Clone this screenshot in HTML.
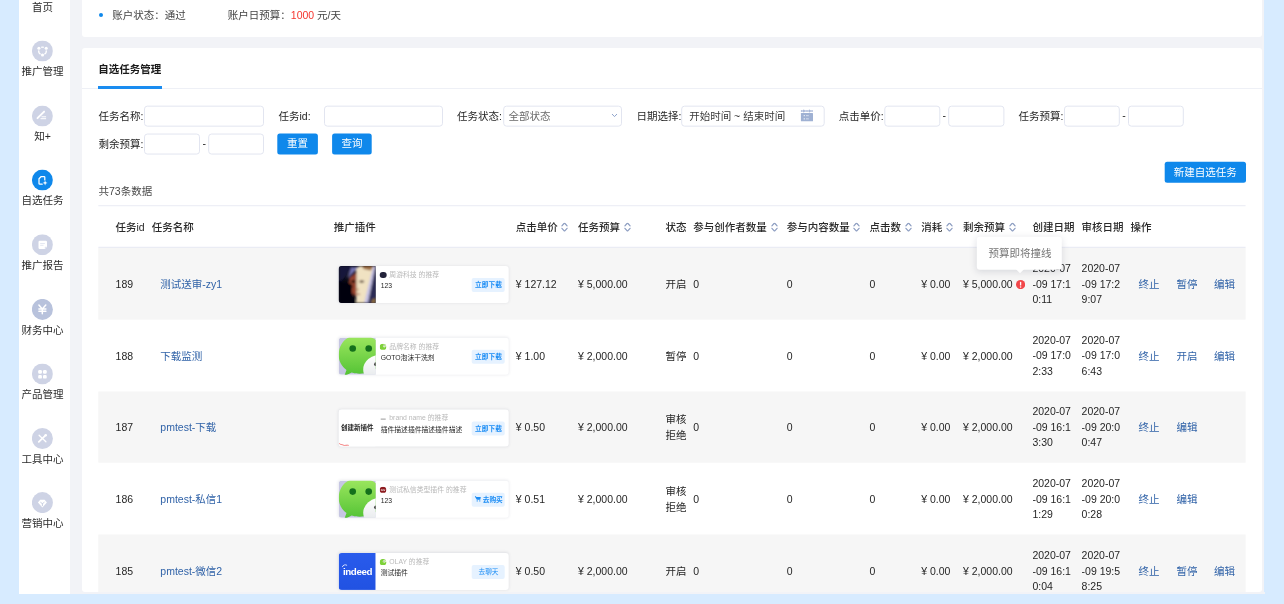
<!DOCTYPE html>
<html lang="zh-CN">
<head>
<meta charset="utf-8">
<title>自选任务管理</title>
<style>
html,body{margin:0;padding:0}
body{width:1284px;height:604px;overflow:hidden;background:#d7ebff;position:relative;font-family:"Liberation Sans","Noto Sans CJK SC",sans-serif;font-size:10.5px;color:#262626}
.a{position:absolute}
.layer{position:absolute;left:0;top:0;width:1284px;height:604px;will-change:transform}
.t{position:absolute;white-space:nowrap;line-height:16px;height:16px}
.page{position:absolute;left:19px;top:0;width:1245.3px;height:594.5px;background:#f2f3f7;overflow:hidden}
.side{position:absolute;left:0;top:0;width:51.3px;height:594.5px;background:#fff}
.card{position:absolute;background:#fff;border-radius:3px}
.ico{position:absolute;left:0;top:0;width:21px;height:21px}
.sl{position:absolute;left:19px;width:47px;text-align:center;line-height:16px;height:16px;white-space:nowrap;color:#2b2b2b}
.btn{position:absolute;box-sizing:border-box;height:21px;color:#fff;text-align:center;line-height:21px;white-space:nowrap}
.h{font-weight:500;color:#2a2a2a}
.lk{color:#3163a8}
.pc{position:absolute;left:0;top:0;width:170.3px;height:37px;background:#fff;border-radius:3px;box-shadow:0 0 3px rgba(30,40,80,.10)}
.pi{position:absolute;left:0;top:0;width:37px;height:37px;border-radius:3px 0 0 3px;overflow:hidden}
.pt{position:absolute;white-space:nowrap;font-size:6.6px;line-height:9px;height:9px}
.pb{position:absolute;left:133.3px;top:11.8px;width:33px;height:14px;border-radius:2px;background:#e6f2ff;color:#1a8cf5;font-size:6.7px;line-height:14px;text-align:center;white-space:nowrap}
</style>
</head>
<body>
<div class="page">
<div class="side"></div>
<div class="card" style="left:63px;top:-10px;width:1180.3px;height:46.7px"></div>
<div class="card" style="left:63px;top:48px;width:1180.3px;height:543.8px"></div>
</div>
<div class="layer">
<div class="sl" style="top:-1.30px">首页</div>
<svg class="ico" style="transform:translate(31.9px,40.50px)" viewBox="0 0 21 21"><circle cx="10.5" cy="10.5" r="10.5" fill="#ced3e5"/><g fill="none" stroke="#fff" stroke-width="1.3"><path d="M14.34 9.84A3.8 3.8 0 0 1 12.5 13.79"/><path d="M8.7 13.79A3.8 3.8 0 0 1 6.86 9.84"/><path d="M9.300 6.930A3.800 3.800 0 0 1 11.900 6.930"/></g><g fill="#fff"><circle cx="7" cy="7.700" r="1.550"/><circle cx="14.300" cy="7.700" r="1.550"/><circle cx="10.600" cy="14.500" r="1.550"/></g></svg>
<div class="sl" style="top:63.30px">推广管理</div>
<svg class="ico" style="transform:translate(31.9px,105.60px)" viewBox="0 0 21 21"><circle cx="10.5" cy="10.5" r="10.5" fill="#ced3e5"/><path d="M5.6 12.6L12.2 6" stroke="#fff" stroke-width="1.9" stroke-linecap="round"/><path d="M9.6 11.2H14.2M8.6 13.1H14.2" stroke="#fff" stroke-width="1"/></svg>
<div class="sl" style="top:128.40px">知+</div>
<svg class="ico" style="transform:translate(31.9px,169.60px)" viewBox="0 0 21 21"><circle cx="10.5" cy="10.5" r="10.5" fill="#0f88eb"/><path d="M12.9 10.300V7.700Q12.900 6.900 12.100 6.900H9.300L7.100 9.200V13.800Q7.100 14.600 7.900 14.600H10.300" fill="none" stroke="#fff" stroke-width="1.25" stroke-linejoin="round" stroke-linecap="round"/><path d="M13.200 10.800L13.900 12.600L15.700 13.300L13.900 14L13.200 15.800L12.500 14L10.700 13.300L12.500 12.600Z" fill="#fff"/></svg>
<div class="sl" style="top:192.40px">自选任务</div>
<svg class="ico" style="transform:translate(31.9px,234.20px)" viewBox="0 0 21 21"><circle cx="10.5" cy="10.5" r="10.5" fill="#ced3e5"/><path d="M7.8 6.5H13.9Q15.1 6.500 15.1 7.7V12.6L12.9 14.8H7.8Q6.6 14.8 6.6 13.6V7.7Q6.6 6.5 7.8 6.5Z" fill="#fff"/><path d="M8.3 9.3H13M8.3 11.1H11.6" stroke="#e1e5f0" stroke-width=".9"/><path d="M12.9 14.8V13.2Q12.9 12.6 13.5 12.6H15.1Z" fill="#dfe3ef"/></svg>
<div class="sl" style="top:257.00px">推广报告</div>
<svg class="ico" style="transform:translate(31.9px,298.90px)" viewBox="0 0 21 21"><circle cx="10.5" cy="10.5" r="10.5" fill="#b8c2dc"/><path d="M7 6.2L10.4 10.2L13.9 6.2M10.4 10.2V14.9M7 10.2H14M7 12.3H14" fill="none" stroke="#fff" stroke-width="1.5" stroke-linecap="round" stroke-linejoin="round"/></svg>
<div class="sl" style="top:321.70px">财务中心</div>
<svg class="ico" style="transform:translate(31.9px,363.40px)" viewBox="0 0 21 21"><circle cx="10.5" cy="10.5" r="10.5" fill="#ced3e5"/><g fill="#fff"><rect x="6.3" y="6.7" width="3.7" height="3.7" rx="1.2"/><rect x="11.1" y="6.7" width="3.7" height="3.7" rx="1.2"/><rect x="6.3" y="11.5" width="3.7" height="3.7" rx="1.2"/><rect x="11.1" y="11.5" width="3.7" height="3.7" rx="1.2"/></g></svg>
<div class="sl" style="top:386.20px">产品管理</div>
<svg class="ico" style="transform:translate(31.9px,428.00px)" viewBox="0 0 21 21"><circle cx="10.5" cy="10.5" r="10.5" fill="#ced3e5"/><path d="M6.9 13.8L13.6 7.4" stroke="#fff" stroke-width="1.8" stroke-linecap="round"/><path d="M7.2 7.3L14 13.7" stroke="#fff" stroke-width="1.3" stroke-linecap="round"/><circle cx="13.8" cy="7.3" r="1.3" fill="#fff"/></svg>
<div class="sl" style="top:450.80px">工具中心</div>
<svg class="ico" style="transform:translate(31.9px,492.10px)" viewBox="0 0 21 21"><circle cx="10.5" cy="10.5" r="10.5" fill="#ced3e5"/><path d="M8.3 7.6H12.7L15 10.4L10.5 15.3L6 10.4Z" fill="#fff"/><path d="M8.8 10.3L10.5 11.6L12.2 10.3M10.500 11.6V13.6" fill="none" stroke="#c3cadf" stroke-width=".9" stroke-linecap="round"/></svg>
<div class="sl" style="top:514.90px">营销中心</div>
<div class="a" style="left:98.6px;top:13.3px;width:4px;height:4px;border-radius:2px;background:#0f88eb"></div>
<span class="t " style="left:112.30px;top:7.00px;color:#444">账户状态：通过</span>
<span class="t " style="left:227.80px;top:7.00px;color:#444">账户日预算：<span style="color:#f5352e">1000</span> 元/天</span>
<span class="t " style="left:98.20px;top:61.00px;font-weight:700;color:#1a1a1a">自选任务管理</span>
<div class="a" style="left:82px;top:88.3px;width:1180.3px;height:1px;background:#eef0f6"></div>
<div class="a" style="left:98px;top:86.3px;width:63.5px;height:2.6px;background:#1a8cf0"></div>
<svg class="a" style="left:0;top:0" width="1284" height="200" viewBox="0 0 1284 200"><rect x="144.50" y="106.15" width="119.00" height="20.00" rx="2.8" fill="#fff" stroke="#e2e5f0" stroke-width="1"/><rect x="324.50" y="106.15" width="118.00" height="20.00" rx="2.8" fill="#fff" stroke="#e2e5f0" stroke-width="1"/><rect x="503.70" y="106.15" width="117.80" height="20.00" rx="2.8" fill="#fff" stroke="#e2e5f0" stroke-width="1"/><rect x="681.70" y="106.15" width="142.50" height="20.00" rx="2.8" fill="#fff" stroke="#e2e5f0" stroke-width="1"/><rect x="884.80" y="106.15" width="55.00" height="20.00" rx="2.8" fill="#fff" stroke="#e2e5f0" stroke-width="1"/><rect x="948.70" y="106.15" width="55.20" height="20.00" rx="2.8" fill="#fff" stroke="#e2e5f0" stroke-width="1"/><rect x="1064.50" y="106.15" width="54.80" height="20.00" rx="2.8" fill="#fff" stroke="#e2e5f0" stroke-width="1"/><rect x="1128.50" y="106.15" width="54.80" height="20.00" rx="2.8" fill="#fff" stroke="#e2e5f0" stroke-width="1"/><rect x="144.50" y="134.05" width="55.00" height="20.00" rx="2.8" fill="#fff" stroke="#e2e5f0" stroke-width="1"/><rect x="208.70" y="134.05" width="54.80" height="20.00" rx="2.8" fill="#fff" stroke="#e2e5f0" stroke-width="1"/><rect x="277.30" y="133.45" width="40.60" height="21.00" rx="2.5" fill="#0f88eb"/><rect x="332.10" y="133.45" width="39.60" height="21.00" rx="2.5" fill="#0f88eb"/><rect x="1164.70" y="161.80" width="81.30" height="21.00" rx="2.5" fill="#0f88eb"/></svg>
<span class="t " style="left:98.50px;top:108.15px;">任务名称:</span>
<span class="t " style="left:278.50px;top:108.15px;">任务id:</span>
<span class="t " style="left:457.00px;top:108.15px;">任务状态:</span>
<span class="t " style="left:508.60px;top:108.15px;color:#6a6a6a">全部状态</span>
<svg class="a" style="left:611px;top:113.2px" width="7" height="5" viewBox="0 0 7 5"><path d="M1 1L3.5 3.600L6 1" fill="none" stroke="#8fa4cc" stroke-width="1"/></svg>
<span class="t " style="left:636.60px;top:108.15px;">日期选择:</span>
<span class="t " style="left:689.20px;top:108.15px;color:#3a3a3a">开始时间 ~ 结束时间</span>
<svg class="a" style="left:800px;top:109px" width="14" height="13" viewBox="0 0 14 13"><g fill="#a6b6d7"><rect x="0.9" y="1.2" width="12.1" height="1.6"/><rect x="3.2" y="0.6" width="1" height="2.8"/><rect x="8.9" y="0.6" width="1" height="2.8"/></g><g fill="#fff" opacity=".55"><rect x="2" y="1.2" width=".6" height="1.6"/><rect x="5.2" y="1.2" width=".6" height="1.6"/><rect x="6.700" y="1.2" width=".6" height="1.6"/><rect x="8" y="1.2" width=".6" height="1.6"/><rect x="10.800" y="1.2" width=".6" height="1.6"/><rect x="11.900" y="1.2" width=".5" height="1.6"/></g><rect x="0.9" y="4" width="12.1" height="8.300" rx=".5" fill="#9fb1d3"/><g fill="#fff" opacity=".85"><rect x="3.700" y="6.100" width="1.200" height="1.100"/><rect x="6" y="6.100" width="2.800" height="1.100" opacity=".6"/><rect x="3.700" y="9.300" width="1.200" height="1.100"/><rect x="6" y="9.300" width="2.800" height="1.100" opacity=".6"/></g></svg>
<span class="t " style="left:838.80px;top:108.15px;">点击单价:</span>
<span class="t " style="left:942.60px;top:107.25px;">-</span>
<span class="t " style="left:1018.60px;top:108.15px;">任务预算:</span>
<span class="t " style="left:1122.30px;top:107.25px;">-</span>
<span class="t " style="left:98.50px;top:136.25px;">剩余预算:</span>
<span class="t " style="left:202.40px;top:135.35px;">-</span>
<div class="btn" style="left:277.30px;top:133.45px;width:40.60px">重置</div>
<div class="btn" style="left:332.10px;top:133.45px;width:39.60px">查询</div>
<div class="btn" style="left:1164.70px;top:161.80px;width:81.30px">新建自选任务</div>
<span class="t " style="left:98.50px;top:182.50px;color:#4a4a4a">共73条数据</span>
<svg class="a" style="left:0;top:200px" width="1284" height="404" viewBox="0 200 1284 404"><rect x="98.3" y="205.3" width="1147.3" height="0.9" fill="#e7e9f3"/><rect x="98.3" y="247.50" width="1147.3" height="72.10" fill="#f6f6f6"/><rect x="98.3" y="391.50" width="1147.3" height="71.20" fill="#f6f6f6"/><rect x="98.3" y="534.50" width="1147.3" height="71.80" fill="#f6f6f6"/><rect x="98.3" y="246.800" width="1147.3" height="0.9" fill="#e4e7f2"/></svg>
<span class="t h" style="left:115.40px;top:218.90px;">任务id</span>
<span class="t h" style="left:151.80px;top:218.90px;">任务名称</span>
<span class="t h" style="left:333.80px;top:218.90px;">推广插件</span>
<span class="t h" style="left:515.80px;top:218.90px;">点击单价</span>
<svg style="position:absolute;left:561.40px;top:222.30px" width="7" height="10" viewBox="0 0 7 10"><path d="M0.9 3.900L3 1.500Q3.500 0.900 4 1.500L6.100 3.900M0.900 6.300L3 8.700Q3.500 9.300 4 8.700L6.100 6.300" fill="none" stroke="#8b9cc0" stroke-width="1.15" stroke-linecap="round" stroke-linejoin="round"/></svg>
<span class="t h" style="left:578.00px;top:218.90px;">任务预算</span>
<svg style="position:absolute;left:623.60px;top:222.30px" width="7" height="10" viewBox="0 0 7 10"><path d="M0.9 3.900L3 1.500Q3.500 0.900 4 1.500L6.100 3.900M0.900 6.300L3 8.700Q3.500 9.300 4 8.700L6.100 6.300" fill="none" stroke="#8b9cc0" stroke-width="1.15" stroke-linecap="round" stroke-linejoin="round"/></svg>
<span class="t h" style="left:665.50px;top:218.90px;">状态</span>
<span class="t h" style="left:693.30px;top:218.90px;">参与创作者数量</span>
<svg style="position:absolute;left:770.80px;top:222.30px" width="7" height="10" viewBox="0 0 7 10"><path d="M0.9 3.900L3 1.500Q3.500 0.900 4 1.500L6.100 3.900M0.900 6.300L3 8.700Q3.500 9.300 4 8.700L6.100 6.300" fill="none" stroke="#8b9cc0" stroke-width="1.15" stroke-linecap="round" stroke-linejoin="round"/></svg>
<span class="t h" style="left:786.80px;top:218.90px;">参与内容数量</span>
<svg style="position:absolute;left:853.20px;top:222.30px" width="7" height="10" viewBox="0 0 7 10"><path d="M0.9 3.900L3 1.500Q3.500 0.900 4 1.500L6.100 3.900M0.900 6.300L3 8.700Q3.500 9.300 4 8.700L6.100 6.300" fill="none" stroke="#8b9cc0" stroke-width="1.15" stroke-linecap="round" stroke-linejoin="round"/></svg>
<span class="t h" style="left:869.60px;top:218.90px;">点击数</span>
<svg style="position:absolute;left:904.80px;top:222.30px" width="7" height="10" viewBox="0 0 7 10"><path d="M0.9 3.900L3 1.500Q3.500 0.900 4 1.500L6.100 3.900M0.900 6.300L3 8.700Q3.500 9.300 4 8.700L6.100 6.300" fill="none" stroke="#8b9cc0" stroke-width="1.15" stroke-linecap="round" stroke-linejoin="round"/></svg>
<span class="t h" style="left:921.20px;top:218.90px;">消耗</span>
<svg style="position:absolute;left:946.10px;top:222.30px" width="7" height="10" viewBox="0 0 7 10"><path d="M0.9 3.900L3 1.500Q3.500 0.900 4 1.500L6.100 3.900M0.900 6.300L3 8.700Q3.500 9.300 4 8.700L6.100 6.300" fill="none" stroke="#8b9cc0" stroke-width="1.15" stroke-linecap="round" stroke-linejoin="round"/></svg>
<span class="t h" style="left:963.00px;top:218.90px;">剩余预算</span>
<svg style="position:absolute;left:1008.80px;top:222.30px" width="7" height="10" viewBox="0 0 7 10"><path d="M0.9 3.900L3 1.500Q3.500 0.900 4 1.500L6.100 3.900M0.900 6.300L3 8.700Q3.500 9.300 4 8.700L6.100 6.300" fill="none" stroke="#8b9cc0" stroke-width="1.15" stroke-linecap="round" stroke-linejoin="round"/></svg>
<span class="t h" style="left:1032.40px;top:218.90px;">创建日期</span>
<span class="t h" style="left:1081.60px;top:218.90px;">审核日期</span>
<span class="t h" style="left:1130.60px;top:218.90px;">操作</span>
<span class="t " style="left:115.60px;top:276.30px;">189</span>
<span class="t lk" style="left:160.30px;top:276.30px;">测试送审-zy1</span>
<div class="pc" style="transform:translate(338.7px,266.00px)"><div class="pi"><svg width="37" height="37" viewBox="0 0 37 37"><defs><filter id="bl" x="-10%" y="-10%" width="120%" height="120%"><feGaussianBlur stdDeviation="1"/></filter></defs><rect width="37" height="37" fill="#0a0a16"/><g filter="url(#bl)"><polygon points="0,0 14,0 6,12 0,16" fill="#14143a"/><polygon points="12.5,1.5 21,0.5 8.6,12.5" fill="#7674b4"/><polygon points="17.4,3 21,0 36,0 26,37 17.4,37" fill="#f0e2c2"/><polygon points="10.5,12 17.6,6 17.6,31 14,28 10,21" fill="#96432f"/><polygon points="0,15 10,16.5 14,19.5 13,24 13.5,30 17.5,37 0,37" fill="#040408"/><polygon points="36.8,0 38,0 38,38 29.3,38" fill="#2b2c55"/><polygon points="34.5,0 36.8,0 29.3,37 25.5,37" fill="#c6c2e6"/><polygon points="23,0 35,0 32,4.5 25,3" fill="#9a6a40"/><polygon points="33.5,33.5 37,32 37,37 32,37" fill="#8a6a3a"/><ellipse cx="23" cy="15.6" rx="2.6" ry="1.1" fill="#4a3426"/><ellipse cx="14.5" cy="15.5" rx="2.4" ry="1.2" fill="#160a0a"/><ellipse cx="18.8" cy="23.5" rx="1.5" ry="1" fill="#c09470"/><ellipse cx="19.5" cy="28.3" rx="2.2" ry=".8" fill="#b0705a"/></g></svg></div><span class="a" style="left:41.300px;top:5.900px;width:6.600px;height:6.600px;border-radius:50%;background:#23233a"></span><span class="pt" style="left:50.6px;top:3.90px;font-size:6.85px;color:#b9b9b9">周游科技 的推荐</span><span class="pt" style="left:42px;top:15.40px;font-size:6.8px;color:#1f1f1f">123</span><div class="pb" style="font-weight:700">立即下载</div></div>
<span class="t " style="left:515.80px;top:276.30px;">¥ 127.12</span>
<span class="t " style="left:578.00px;top:276.30px;">¥ 5,000.00</span>
<span class="t " style="left:665.50px;top:276.30px;">开启</span>
<span class="t " style="left:693.30px;top:276.30px;">0</span>
<span class="t " style="left:786.80px;top:276.30px;">0</span>
<span class="t " style="left:869.60px;top:276.30px;">0</span>
<span class="t " style="left:921.20px;top:276.30px;">¥ 0.00</span>
<span class="t " style="left:963.00px;top:276.30px;">¥ 5,000.00</span>
<span class="t " style="left:1032.40px;top:259.95px;">2020-07</span>
<span class="t " style="left:1081.60px;top:259.95px;">2020-07</span>
<span class="t " style="left:1032.40px;top:275.70px;">-09 17:1</span>
<span class="t " style="left:1081.60px;top:275.70px;">-09 17:2</span>
<span class="t " style="left:1032.40px;top:291.45px;">0:11</span>
<span class="t " style="left:1081.60px;top:291.45px;">9:07</span>
<span class="t lk" style="left:1138.60px;top:276.30px;">终止</span>
<span class="t lk" style="left:1176.40px;top:276.30px;">暂停</span>
<span class="t lk" style="left:1214.00px;top:276.30px;">编辑</span>
<svg class="a" style="left:1015.8px;top:280.10px" width="9.2" height="9.2" viewBox="0 0 10 10"><circle cx="5" cy="5" r="5" fill="#f2474a"/><rect x="4.3" y="2" width="1.4" height="4" rx=".6" fill="#fff"/><circle cx="5" cy="7.6" r=".85" fill="#fff"/></svg>
<span class="t " style="left:115.60px;top:347.90px;">188</span>
<span class="t lk" style="left:160.30px;top:347.90px;">下载监测</span>
<div class="pc" style="transform:translate(338.7px,337.70px)"><div class="pi"><svg width="37" height="37" viewBox="0 0 37 37"><defs><linearGradient id="wg1" x1="0" y1="0" x2="0" y2="1"><stop offset="0" stop-color="#9fe860"/><stop offset="1" stop-color="#52c234"/></linearGradient><linearGradient id="ww1" x1="0" y1="0" x2="0" y2="1"><stop offset="0" stop-color="#ffffff"/><stop offset="1" stop-color="#dfe3e6"/></linearGradient></defs><rect width="37" height="37" fill="#c6c6e2"/><path d="M21 -3C34 -3 45 6 45 17C45 28 34 36 21 36C18 36 15.5 35.600 13 34.800L5.500 38.500L7.800 32.200C3 28.800 0 23.500 0 17C0 6 8 -3 21 -3Z" fill="url(#wg1)"/><circle cx="14" cy="10.800" r="3.300" fill="#14701c"/><circle cx="30" cy="10.800" r="3.300" fill="#14701c"/><ellipse cx="42" cy="32" rx="17.500" ry="15" fill="url(#ww1)"/><circle cx="37.300" cy="26.500" r="1.900" fill="#444"/></svg></div><svg class="a" style="left:41.300px;top:5.900px" width="6.600" height="6.600" viewBox="0 0 10 10"><circle cx="5" cy="5" r="5" fill="#7ed13a"/><circle cx="7" cy="3.500" r="2.200" fill="#eaf7d8"/><circle cx="6.500" cy="3.200" r=".8" fill="#2d7d1f"/></svg><span class="pt" style="left:50.6px;top:3.90px;font-size:6.85px;color:#b9b9b9">品牌名称 的推荐</span><span class="pt" style="left:42px;top:15.40px;font-size:6.8px;color:#1f1f1f">GOTO泡沫干洗剂</span><div class="pb" style="font-weight:700">立即下载</div></div>
<span class="t " style="left:515.80px;top:347.90px;">¥ 1.00</span>
<span class="t " style="left:578.00px;top:347.90px;">¥ 2,000.00</span>
<span class="t " style="left:665.50px;top:347.90px;">暂停</span>
<span class="t " style="left:693.30px;top:347.90px;">0</span>
<span class="t " style="left:786.80px;top:347.90px;">0</span>
<span class="t " style="left:869.60px;top:347.90px;">0</span>
<span class="t " style="left:921.20px;top:347.90px;">¥ 0.00</span>
<span class="t " style="left:963.00px;top:347.90px;">¥ 2,000.00</span>
<span class="t " style="left:1032.40px;top:331.55px;">2020-07</span>
<span class="t " style="left:1081.60px;top:331.55px;">2020-07</span>
<span class="t " style="left:1032.40px;top:347.30px;">-09 17:0</span>
<span class="t " style="left:1081.60px;top:347.30px;">-09 17:0</span>
<span class="t " style="left:1032.40px;top:363.05px;">2:33</span>
<span class="t " style="left:1081.60px;top:363.05px;">6:43</span>
<span class="t lk" style="left:1138.60px;top:347.90px;">终止</span>
<span class="t lk" style="left:1176.40px;top:347.90px;">开启</span>
<span class="t lk" style="left:1214.00px;top:347.90px;">编辑</span>
<span class="t " style="left:115.60px;top:419.30px;">187</span>
<span class="t lk" style="left:160.30px;top:419.30px;">pmtest-下载</span>
<div class="pc" style="transform:translate(338.7px,409.60px)"><div class="pi"><div style="position:absolute;left:0;top:0;width:37px;height:37px;background:#fff"></div><span class="pt" style="left:2.2px;top:13.3px;font-weight:700;font-size:6.5px;color:#222">创建新插件</span><svg class="a" style="left:0;top:32.5px" width="11" height="4" viewBox="0 0 11 4"><path d="M0.500 0.800C2 2.500 3 1.500 4.500 2.500S8 2 10 2.800" fill="none" stroke="#f26b6b" stroke-width=".9"/></svg></div><span class="a" style="left:42px;top:9px;width:5px;height:.8px;background:#999"></span><span class="pt" style="left:50.6px;top:3.20px;font-size:6.85px;color:#b9b9b9">brand name 的推荐</span><span class="pt" style="left:42px;top:14.70px;font-size:6.8px;color:#1f1f1f">插件描述插件描述插件描述</span><div class="pb" style="font-weight:700">立即下载</div></div>
<span class="t " style="left:515.80px;top:419.30px;">¥ 0.50</span>
<span class="t " style="left:578.00px;top:419.30px;">¥ 2,000.00</span>
<span class="t " style="left:665.50px;top:411.40px;">审核</span>
<span class="t " style="left:665.50px;top:427.20px;">拒绝</span>
<span class="t " style="left:693.30px;top:419.30px;">0</span>
<span class="t " style="left:786.80px;top:419.30px;">0</span>
<span class="t " style="left:869.60px;top:419.30px;">0</span>
<span class="t " style="left:921.20px;top:419.30px;">¥ 0.00</span>
<span class="t " style="left:963.00px;top:419.30px;">¥ 2,000.00</span>
<span class="t " style="left:1032.40px;top:402.95px;">2020-07</span>
<span class="t " style="left:1081.60px;top:402.95px;">2020-07</span>
<span class="t " style="left:1032.40px;top:418.70px;">-09 16:1</span>
<span class="t " style="left:1081.60px;top:418.70px;">-09 20:0</span>
<span class="t " style="left:1032.40px;top:434.45px;">3:30</span>
<span class="t " style="left:1081.60px;top:434.45px;">0:47</span>
<span class="t lk" style="left:1138.60px;top:419.30px;">终止</span>
<span class="t lk" style="left:1176.40px;top:419.30px;">编辑</span>
<span class="t " style="left:115.60px;top:491.30px;">186</span>
<span class="t lk" style="left:160.30px;top:491.30px;">pmtest-私信1</span>
<div class="pc" style="transform:translate(338.7px,480.80px)"><div class="pi"><svg width="37" height="37" viewBox="0 0 37 37"><defs><linearGradient id="wg2" x1="0" y1="0" x2="0" y2="1"><stop offset="0" stop-color="#9fe860"/><stop offset="1" stop-color="#52c234"/></linearGradient><linearGradient id="ww2" x1="0" y1="0" x2="0" y2="1"><stop offset="0" stop-color="#ffffff"/><stop offset="1" stop-color="#dfe3e6"/></linearGradient></defs><rect width="37" height="37" fill="#c6c6e2"/><path d="M21 -3C34 -3 45 6 45 17C45 28 34 36 21 36C18 36 15.5 35.600 13 34.800L5.500 38.500L7.800 32.200C3 28.800 0 23.500 0 17C0 6 8 -3 21 -3Z" fill="url(#wg2)"/><circle cx="14" cy="10.800" r="3.300" fill="#14701c"/><circle cx="30" cy="10.800" r="3.300" fill="#14701c"/><ellipse cx="42" cy="32" rx="17.500" ry="15" fill="url(#ww2)"/><circle cx="37.300" cy="26.500" r="1.900" fill="#444"/></svg></div><svg class="a" style="left:41.300px;top:5.900px" width="6.600" height="6.600" viewBox="0 0 10 10"><circle cx="5" cy="5" r="5" fill="#8e1c20"/><path d="M2.500 6.200V4L3.800 5.600L5 4V6.200M6.200 4L7 6.200L7.800 4" fill="none" stroke="#fff" stroke-width=".9"/></svg><span class="pt" style="left:50.6px;top:3.90px;font-size:6.85px;color:#b9b9b9">测试私信类型插件 的推荐</span><span class="pt" style="left:42px;top:15.40px;font-size:6.8px;color:#1f1f1f">123</span><div class="pb" style="font-weight:700"><svg style="display:inline-block;vertical-align:-0.6px;margin-right:2px" width="6.5" height="6" viewBox="0 0 13 12"><path d="M0 .800H2.500L3.300 2.500H13L11.300 8H4.200Z" fill="#1a8cf5"/><circle cx="5" cy="10.300" r="1.400" fill="#1a8cf5"/><circle cx="10.300" cy="10.300" r="1.400" fill="#1a8cf5"/></svg>去购买</div></div>
<span class="t " style="left:515.80px;top:491.30px;">¥ 0.51</span>
<span class="t " style="left:578.00px;top:491.30px;">¥ 2,000.00</span>
<span class="t " style="left:665.50px;top:483.40px;">审核</span>
<span class="t " style="left:665.50px;top:499.20px;">拒绝</span>
<span class="t " style="left:693.30px;top:491.30px;">0</span>
<span class="t " style="left:786.80px;top:491.30px;">0</span>
<span class="t " style="left:869.60px;top:491.30px;">0</span>
<span class="t " style="left:921.20px;top:491.30px;">¥ 0.00</span>
<span class="t " style="left:963.00px;top:491.30px;">¥ 2,000.00</span>
<span class="t " style="left:1032.40px;top:474.95px;">2020-07</span>
<span class="t " style="left:1081.60px;top:474.95px;">2020-07</span>
<span class="t " style="left:1032.40px;top:490.70px;">-09 16:1</span>
<span class="t " style="left:1081.60px;top:490.70px;">-09 20:0</span>
<span class="t " style="left:1032.40px;top:506.45px;">1:29</span>
<span class="t " style="left:1081.60px;top:506.45px;">0:28</span>
<span class="t lk" style="left:1138.60px;top:491.30px;">终止</span>
<span class="t lk" style="left:1176.40px;top:491.30px;">编辑</span>
<span class="t " style="left:115.60px;top:563.20px;">185</span>
<span class="t lk" style="left:160.30px;top:563.20px;">pmtest-微信2</span>
<div class="pc" style="transform:translate(338.7px,552.90px)"><div class="pi"><div style="position:absolute;left:0;top:0;width:37px;height:37px;background:linear-gradient(180deg,#295bec,#2152e2)"></div><span class="pt" style="left:4.2px;top:12.6px;font-weight:700;font-size:9.8px;letter-spacing:-.4px;color:#fff;line-height:11px;height:11px">indeed</span><svg class="a" style="left:2.6px;top:11.4px" width="6" height="4" viewBox="0 0 6 4"><path d="M0.600 3.200C1 1 4 .3 5.400 1.500" fill="none" stroke="#fff" stroke-width=".8"/></svg></div><svg class="a" style="left:41.300px;top:5.900px" width="6.600" height="6.600" viewBox="0 0 10 10"><circle cx="5" cy="5" r="5" fill="#7ed13a"/><circle cx="7" cy="3.500" r="2.200" fill="#eaf7d8"/><circle cx="6.500" cy="3.200" r=".8" fill="#2d7d1f"/></svg><span class="pt" style="left:50.6px;top:3.90px;font-size:6.85px;color:#b9b9b9">OLAY 的推荐</span><span class="pt" style="left:42px;top:15.40px;font-size:6.8px;color:#1f1f1f">测试插件</span><div class="pb" style="font-weight:400">去聊天</div></div>
<span class="t " style="left:515.80px;top:563.20px;">¥ 0.50</span>
<span class="t " style="left:578.00px;top:563.20px;">¥ 2,000.00</span>
<span class="t " style="left:665.50px;top:563.20px;">开启</span>
<span class="t " style="left:693.30px;top:563.20px;">0</span>
<span class="t " style="left:786.80px;top:563.20px;">0</span>
<span class="t " style="left:869.60px;top:563.20px;">0</span>
<span class="t " style="left:921.20px;top:563.20px;">¥ 0.00</span>
<span class="t " style="left:963.00px;top:563.20px;">¥ 2,000.00</span>
<span class="t " style="left:1032.40px;top:546.85px;">2020-07</span>
<span class="t " style="left:1081.60px;top:546.85px;">2020-07</span>
<span class="t " style="left:1032.40px;top:562.60px;">-09 16:1</span>
<span class="t " style="left:1081.60px;top:562.60px;">-09 19:5</span>
<span class="t " style="left:1032.40px;top:578.35px;">0:04</span>
<span class="t " style="left:1081.60px;top:578.35px;">8:25</span>
<span class="t lk" style="left:1138.60px;top:563.20px;">终止</span>
<span class="t lk" style="left:1176.40px;top:563.20px;">暂停</span>
<span class="t lk" style="left:1214.00px;top:563.20px;">编辑</span>
<div class="a" style="left:0;top:0;transform:translate(976.8px,236.8px);width:85.2px;height:32.7px;background:#fff;border-radius:3px;box-shadow:0 2px 7px rgba(20,30,60,.13)"></div>
<div class="a" style="left:1017px;top:266.3px;width:6px;height:6px;background:#fff;transform:rotate(45deg)"></div>
<span class="t " style="left:988.60px;top:245.25px;color:#767676">预算即将撞线</span>
</div>
<div class="a" style="left:0;top:594px;width:1284px;height:10px;background:#d7ebff"></div>
<div class="a" style="left:82px;top:591.8px;width:1182.5px;height:2.4px;background:#f2f3f7"></div>
</body>
</html>
